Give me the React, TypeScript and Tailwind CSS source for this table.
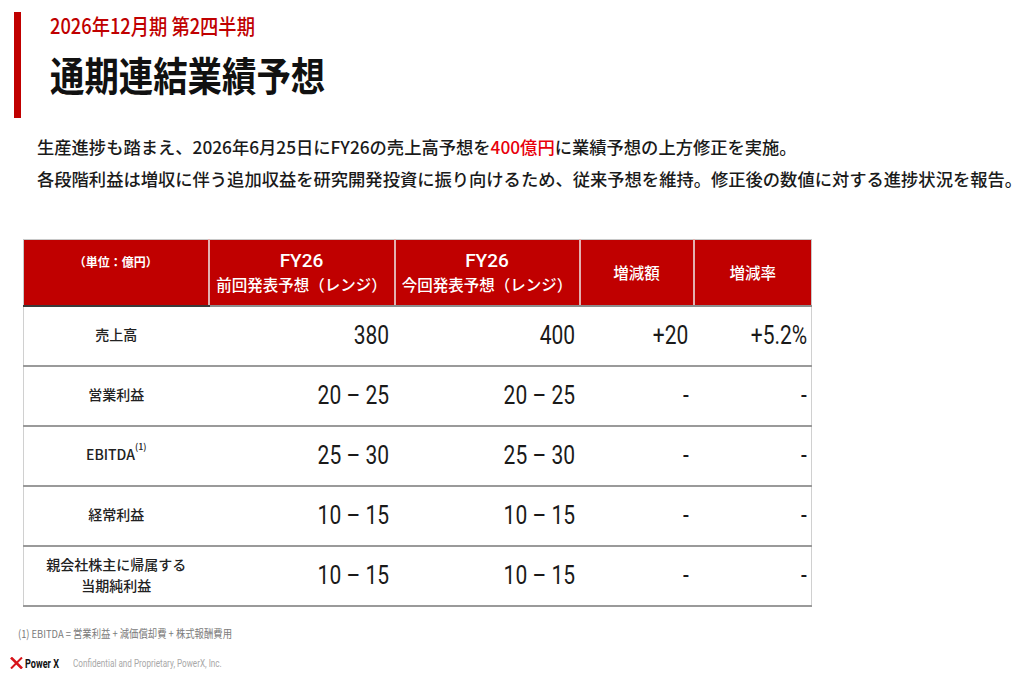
import React from "react";

const JP = "font-['Noto_Sans_CJK_JP',sans-serif]";
const NUM = "font-['Roboto','Noto_Sans_CJK_JP',sans-serif]";

type Row = { label: React.ReactNode; prev: string; next: string; diff: string; rate: string };

const rows: Row[] = [
  { label: "売上高", prev: "380", next: "400", diff: "+20", rate: "+5.2%" },
  { label: "営業利益", prev: "20 – 25", next: "20 – 25", diff: "-", rate: "-" },
  {
    label: (
      <>
        EBITDA<sup className="text-[9px] align-[6px]">(1)</sup>
      </>
    ),
    prev: "25 – 30",
    next: "25 – 30",
    diff: "-",
    rate: "-",
  },
  { label: "経常利益", prev: "10 – 15", next: "10 – 15", diff: "-", rate: "-" },
  {
    label: (
      <>
        親会社株主に帰属する
        <br />
        当期純利益
      </>
    ),
    prev: "10 – 15",
    next: "10 – 15",
    diff: "-",
    rate: "-",
  },
];

/** condensed number, anchored to the right edge of its cell */
function Num({ value }: { value: string }) {
  return (
    <span className={`inline-block origin-right scale-x-[0.84] text-[25px] leading-none text-[#1a1a1a] ${NUM}`}>
      {value}
    </span>
  );
}

function PowerXLogo() {
  return (
    <svg width="13" height="12" viewBox="0 0 13 12" aria-hidden>
      <path d="M1 0.5 L12 11.5" stroke="#d7141a" strokeWidth="2.6" />
      <path d="M12 0.5 L1 11.5" stroke="#d7141a" strokeWidth="2" />
    </svg>
  );
}

export default function App() {
  return (
    <div className={`relative flex h-[689px] w-[1024px] flex-col overflow-hidden bg-white ${JP}`}>
      {/* title block */}
      <div className="flex pt-[12px]">
        <div className="ml-[14px] h-[106px] w-[7px] bg-[#c00000]" />
        <div className="ml-[29px] flex flex-col">
          <div className="origin-left scale-x-[0.87] whitespace-nowrap text-[21px] font-medium leading-[26px] text-[#c00000]">
            2026年12月期 第2四半期
          </div>
          <div className="mt-[12px] origin-left scale-x-[0.86] whitespace-nowrap text-[40px] font-bold leading-[48px] text-[#111]">
            通期連結業績予想
          </div>
        </div>
      </div>

      {/* lead text */}
      <div className="ml-[37px] mt-[13px] flex flex-col text-[17.3px] font-medium leading-[32px] text-[#1a1a1a] whitespace-nowrap">
        <p>
          生産進捗も踏まえ、2026年6月25日にFY26の売上高予想を<span className="text-[#e8000b]">400億円</span>
          に業績予想の上方修正を実施。
        </p>
        <p>各段階利益は増収に伴う追加収益を研究開発投資に振り向けるため、従来予想を維持。修正後の数値に対する進捗状況を報告。</p>
      </div>

      {/* forecast table */}
      <table className="ml-[23px] mt-[44px] w-[788px] table-fixed border-collapse">
        <colgroup>
          <col className="w-[185px]" />
          <col className="w-[186px]" />
          <col className="w-[185px]" />
          <col className="w-[114px]" />
          <col className="w-[118px]" />
        </colgroup>
        <thead>
          <tr className="h-[66px] bg-[#c00000] text-white">
            <th className="border-b-2 border-l border-t border-b-[#3a3a3a] border-l-[#c8c8c8] border-t-[#c8c8c8] pt-[13px] align-top text-[12px] font-bold leading-[18px]">
              （単位：億円）
            </th>
            <th className="border-b-2 border-l-2 border-t border-b-[#8c8c8c] border-l-[#e3b0b0] border-t-[#c8c8c8] align-middle font-medium">
              <div className={`text-[19px] leading-[24px] ${NUM}`}>FY26</div>
              <div className="text-[15.5px] leading-[22px]">前回発表予想（レンジ）</div>
            </th>
            <th className="border-b-2 border-l-2 border-t border-b-[#8c8c8c] border-l-[#e3b0b0] border-t-[#c8c8c8] align-middle font-medium">
              <div className={`text-[19px] leading-[24px] ${NUM}`}>FY26</div>
              <div className="text-[15.5px] leading-[22px]">今回発表予想（レンジ）</div>
            </th>
            <th className="border-b-2 border-l-2 border-t border-b-[#8c8c8c] border-l-[#e3b0b0] border-t-[#c8c8c8] align-middle text-[15.5px] font-medium">
              増減額
            </th>
            <th className="border-b-2 border-l-2 border-r border-t border-b-[#8c8c8c] border-l-[#e3b0b0] border-r-[#c8c8c8] border-t-[#c8c8c8] align-middle text-[15.5px] font-medium">
              増減率
            </th>
          </tr>
        </thead>
        <tbody>
          {rows.map((r, i) => (
            <tr key={i} className="h-[60px] border-b-2 border-[#9a9a9a]">
              <td className="border-l border-[#d0d0d0] pb-[2px] text-center text-[14px] font-medium leading-[21px] text-[#222]">
                {r.label}
              </td>
              <td className="pr-[5px] text-right">
                <Num value={r.prev} />
              </td>
              <td className="pr-[4px] text-right">
                <Num value={r.next} />
              </td>
              <td className="pr-[5px] text-right">
                <Num value={r.diff} />
              </td>
              <td className="border-r border-[#d0d0d0] pr-[4px] text-right">
                <Num value={r.rate} />
              </td>
            </tr>
          ))}
        </tbody>
      </table>

      {/* footnote */}
      <div className="ml-[18px] mt-[19px] origin-left scale-x-[0.85] whitespace-nowrap text-[11px] leading-[14px] text-[#7a7a7a]">
        (1) EBITDA = 営業利益 + 減価償却費 + 株式報酬費用
      </div>

      {/* footer */}
      <div className="ml-[10px] mt-[17px] flex items-center">
        <PowerXLogo />
        <span className={`ml-[2px] w-[40px] origin-left scale-x-[0.7] whitespace-nowrap text-[13px] font-bold leading-none text-[#111] ${NUM}`}>
          Power X
        </span>
        <span className={`ml-[8px] origin-left scale-x-[0.74] whitespace-nowrap text-[11px] leading-none text-[#a8a8a8] ${NUM}`}>
          Confidential and Proprietary, PowerX, Inc.
        </span>
      </div>
    </div>
  );
}
